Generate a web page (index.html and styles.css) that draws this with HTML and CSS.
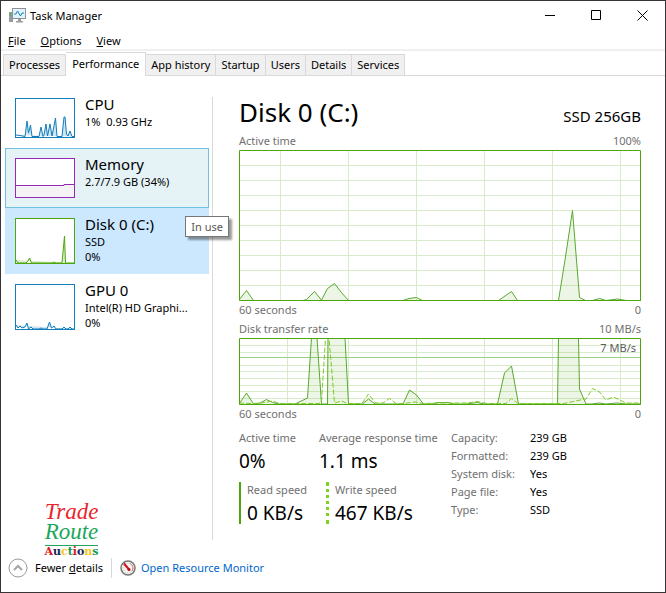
FILE: index.html
```html
<!DOCTYPE html>
<html lang="en">
<head>
<meta charset="utf-8">
<title>Task Manager</title>
<link rel="stylesheet" href="styles.css">
</head>
<body>
<div class="window">
  <header class="titlebar">
    <svg class="app-icon" viewBox="0 0 17 15" aria-hidden="true">
      <rect x="0" y="4" width="4" height="10" fill="#9b9b9b"/>
      <rect x="1" y="5" width="1" height="3" fill="#4caf50"/>
      <rect x="3.5" y="0.5" width="13" height="10" fill="#e3f3fb" stroke="#8b9399"/>
      <path d="M5 6h2l1.500-3 3 5 1.500-3h2" fill="none" stroke="#1883c4"/>
      <path d="M9 11h3v2h2v1.500H7V13h2z" fill="#9b9b9b"/>
    </svg>
    <h1 class="app-name">Task Manager</h1>
    <div class="window-controls">
      <button class="control" aria-label="Minimize"><svg viewBox="0 0 11 11"><path d="M0 5.500h10"/></svg></button>
      <button class="control" aria-label="Maximize"><svg viewBox="0 0 11 11"><path d="M.5.5h9v9h-9z"/></svg></button>
      <button class="control" aria-label="Close"><svg viewBox="0 0 11 11"><path d="M.5.5l10 10M10.500.5l-10 10"/></svg></button>
    </div>
  </header>
  <nav class="menu">
    <button class="menu-item"><u>F</u>ile</button>
    <button class="menu-item"><u>O</u>ptions</button>
    <button class="menu-item"><u>V</u>iew</button>
  </nav>
  <div class="tabs" role="tablist">
    <button class="tab" role="tab">Processes</button>
    <button class="tab active" role="tab" aria-selected="true">Performance</button>
    <button class="tab" role="tab">App history</button>
    <button class="tab" role="tab">Startup</button>
    <button class="tab" role="tab">Users</button>
    <button class="tab" role="tab">Details</button>
    <button class="tab" role="tab">Services</button>
  </div>
  <div class="content">
    <aside class="sidebar">
      <button class="resource">
        <svg class="thumb cpu" viewBox="0 0 58 38" preserveAspectRatio="none"><path d="M0 36L4 36.500 9 37.500 11 22 12.500 34 14.500 26 16 37.500H23L25 28 27 37.500 28 36 30 25 31.500 37 34 25 36 37 39.500 19 41 37.500H46L48 18 49 18 50.500 35 52 37 54 32 56 37.500H58"/></svg>
        <span class="info"><span class="name">CPU</span><span class="detail">1%&nbsp; 0.93 GHz</span></span>
      </button>
      <button class="resource hovered">
        <svg class="thumb memory" viewBox="0 0 58 38" preserveAspectRatio="none"><path d="M-1 26.500h49v-1h11v14H-1z"/></svg>
        <span class="info"><span class="name">Memory</span><span class="detail">2.7/7.9 GB (34%)</span></span>
      </button>
      <button class="resource tall selected">
        <svg class="thumb disk" viewBox="0 0 58 44" preserveAspectRatio="none"><path d="M0 41L2 44H10L12 42 13.500 39 15.500 44H36L38 43 40 44H46L48.500 17 49.500 44H58"/></svg>
        <span class="info"><span class="name">Disk 0 (C:)</span><span class="detail">SSD</span><span class="detail">0%</span></span>
        <span class="tooltip" role="tooltip">In use</span>
      </button>
      <button class="resource tall">
        <svg class="thumb gpu" viewBox="0 0 58 44" preserveAspectRatio="none"><path d="M0 40L2 43 4 41 6 43 9 42 11 38 12.500 44 15 42 17 44H23L25 43 27 44H31L33.500 37 35.500 43 38 41 40 44H46L48 42 50 44H52L54 42 56 44H58"/></svg>
        <span class="info"><span class="name">GPU 0</span><span class="detail">Intel(R) HD Graphi...</span><span class="detail">0%</span></span>
      </button>
      <div class="brand">
        <span class="brand-top">Trade</span>
        <span class="brand-middle">Route</span>
        <span class="brand-bottom"><b class="r">A</b><b class="n">u</b><b class="y">c</b><b class="g">t</b><b class="r">i</b><b class="n">o</b><b class="y">n</b><b class="g">s</b></span>
      </div>
    </aside>
    <main class="panel">
      <div class="heading"><h2>Disk 0 (C:)</h2><span class="model">SSD 256GB</span></div>
      <div class="caption"><span>Active time</span><span>100%</span></div>
      <svg class="chart activity" viewBox="0 0 402 151" preserveAspectRatio="none" role="img" aria-label="Active time">
        <path class="grid" d="M0 15.500h402M0 30.500h402M0 45.500h402M0 60.500h402M0 75.500h402M0 90.500h402M0 105.500h402M0 120.500h402M0 135.500h402M41.500 0v151M109.500 0v151M177.500 0v151M245.500 0v151M313.500 0v151M381.500 0v151"/>
        <path class="read" d="M0 150L7.500 140.500 14.500 150.500H64L67.500 149.500 75.500 141.500 82.500 150 88.500 138.500 95.500 133.500 102 142 109.500 150.500H164L170 148.500 177.500 147.500 183.500 150.500H259.500L272.500 141.500 278.500 150.500H319.500L326 110 333.500 60.500 340.500 147.500 346.500 150.500H353.500L360.500 148.500 367 150.500 378.500 149 387 150.500H402"/>
        <rect class="frame" x=".5" y=".5" width="401" height="150"/>
      </svg>
      <div class="caption below"><span>60 seconds</span><span>0</span></div>
      <div class="caption"><span>Disk transfer rate</span><span>10 MB/s</span></div>
      <div class="chart-wrap">
        <svg class="chart transfer" viewBox="0 0 402 67" preserveAspectRatio="none" role="img" aria-label="Disk transfer rate">
          <path class="grid" d="M0 7.500h402M0 14.500h402M0 27.500h402M0 33.500h402M0 40.500h402M0 47.500h402M0 53.500h402M0 60.500h402M48.500 0v67M109.500 0v67M177.500 0v67M245.500 0v67M313.500 0v67M381.500 0v67"/>
          <path class="limit" d="M0 19.500h402"/>
          <path class="read" d="M0 66L7.500 55 14.500 66 21 65 27.500 61.500 33.500 64.500 40 66H56L68.500 60 72.500 0H78L82.500 66H88.500L89 0H106L109.500 66H123.500L129.500 61 136 66H164L170.500 52 177.500 57 184.500 66H193L199 64.500H209.500L215 66H227L238.500 64.500 245 66H258.500L265.500 35 272.500 28 279.500 66H318.500L319.500 0H339.500L340.500 51 347 66H353L360 65 367 66 378 65 387 66H402"/>
          <path class="write" d="M0 65L14 65.500 22 65 34 63 40 65.500H80L82.500 64 86.500 0H90L95.500 65 102.500 63 108 65.500H123L129.500 56 136.500 65 144 65 150.500 60.500 157 65.500 164 65.500 176 64 184 65.500 200 65 228 65 238 63.500 248 65.500H267L272.500 60.500 279 65.500H325L343.500 61.500 347 61 353.500 50.500 360.500 54 367 62 374.500 59 387 65 402 65"/>
          <rect class="frame" x=".5" y=".5" width="401" height="66"/>
        </svg>
        <span class="limit-label">7 MB/s</span>
      </div>
      <div class="caption below"><span>60 seconds</span><span>0</span></div>
      <div class="stats">
        <div class="figures">
          <div class="figure"><span class="label">Active time</span><span class="value">0%</span></div>
          <div class="figure"><span class="label">Average response time</span><span class="value">1.1 ms</span></div>
          <div class="figure keyed solid"><span class="label">Read speed</span><span class="value">0 KB/s</span></div>
          <div class="figure keyed dotted"><span class="label">Write speed</span><span class="value">467 KB/s</span></div>
        </div>
        <table class="properties">
          <tr><th scope="row">Capacity:</th><td>239 GB</td></tr>
          <tr><th scope="row">Formatted:</th><td>239 GB</td></tr>
          <tr><th scope="row">System disk:</th><td>Yes</td></tr>
          <tr><th scope="row">Page file:</th><td>Yes</td></tr>
          <tr><th scope="row">Type:</th><td>SSD</td></tr>
        </table>
      </div>
    </main>
  </div>
  <footer class="footer">
    <button class="fewer">
      <svg viewBox="0 0 20 20" aria-hidden="true"><circle cx="10" cy="10" r="9" fill="#fff" stroke="#999"/><path d="M6 12l4-4 4 4" fill="none" stroke="#a5a5a5" stroke-width="2"/></svg>
      <span>Fewer <u>d</u>etails</span>
    </button>
    <a class="monitor" href="#">
      <svg viewBox="0 0 16 16" aria-hidden="true"><circle cx="8" cy="8" r="7" fill="#f4f4f4" stroke="#777" stroke-width="1.500"/><circle cx="8" cy="8" r="5" fill="none" stroke="#b9bcae" stroke-dasharray="1 1.500"/><path d="M10 3.500A5 5 0 0 1 12 11" fill="none" stroke="#dd7a62"/><path d="M4 3.500l5 6" stroke="#d3131b" stroke-width="2"/><circle cx="9" cy="9.500" r="1.500" fill="#b50d14"/></svg>
      <span>Open Resource Monitor</span>
    </a>
  </footer>
</div>
</body>
</html>
```
FILE: styles.css
```css
* { box-sizing: border-box; }
body {
  margin: 0;
  background: #fff;
  color: #000;
  font: 11px/16px "Noto Sans", "Open Sans", sans-serif;
}
button {
  margin: 0;
  padding: 0;
  border: 0;
  background: none;
  color: inherit;
  font: inherit;
  text-align: left;
}
svg { display: block; flex: none; }
.window {
  display: flex;
  flex-direction: column;
  min-height: 100vh;
  border: 1px solid #383436;
  background: #fff;
}
.titlebar { display: flex; align-items: center; height: 29px; padding-left: 8px; }
.app-icon { width: 17px; height: 15px; }
.app-name { margin: 0 0 0 4px; font-size: 11px; font-weight: 400; }
.window-controls { display: flex; margin-left: auto; }
.control { display: grid; place-items: center; width: 46px; height: 29px; }
.control svg { width: 11px; height: 11px; fill: none; stroke: #000; }
.menu {
  display: flex;
  gap: 15px;
  height: 21px;
  padding: 2px 7px 0;
  border-bottom: 2px solid #f0f0f0;
}
.tabs {
  display: flex;
  align-items: flex-end;
  height: 25px;
  padding-left: 2px;
  border-bottom: 1px solid #d9d9d9;
}
.tab {
  height: 21px;
  padding: 0 5px;
  border: 1px solid #d9d9d9;
  border-width: 1px 1px 0 0;
  background: #f0f0f0;
}
.tab:first-child { border-left-width: 1px; }
.tab.active {
  height: 24px;
  margin-bottom: -1px;
  padding: 0 6px 2px;
  background: #fff;
}
.content { display: flex; flex: 1; }
.sidebar {
  display: flex;
  flex-direction: column;
  flex: none;
  width: 208px;
  padding: 12px 0 0 4px;
}
.resource {
  position: relative;
  display: flex;
  align-items: flex-start;
  gap: 10px;
  height: 60px;
  padding: 9px;
  border: 1px solid transparent;
}
.resource.tall { height: 66px; }
.resource.hovered { background: #e5f3f7; border-color: #70c0e0; }
.resource.selected { background: #cce8ff; }
.thumb { width: 60px; height: 40px; border: 1px solid; background: #fff; overflow: hidden; }
.tall .thumb { height: 46px; }
.thumb path { stroke: currentColor; fill: currentColor; fill-opacity: .2; }
.cpu, .gpu { color: #117dbb; }
.memory { color: #9528b4; }
.memory path { fill: #f4f2f4; fill-opacity: 1; }
.disk { color: #4da60c; }
.info { display: flex; flex-direction: column; }
.name { margin-top: -3px; font-size: 15px; line-height: 19px; }
.detail { line-height: 15px; white-space: nowrap; }
.tooltip {
  position: absolute;
  top: 7px;
  right: -21px;
  z-index: 1;
  padding: 1px 5px;
  border: 1px solid #767676;
  background: #fff;
  box-shadow: 3px 3px 2px rgba(0, 0, 0, .4);
  color: #575757;
  line-height: 17px;
}
.brand {
  display: flex;
  flex-direction: column;
  align-items: center;
  align-self: flex-start;
  width: 55px;
  margin: auto 0 0 39px;
  font-family: "Liberation Serif", serif;
}
.brand-top, .brand-middle { font-size: 23px; font-style: italic; line-height: 20px; }
.brand-top { color: #e8242c; }
.brand-middle { padding-bottom: 3px; border-bottom: 1px solid #1ca65a; color: #1ca65a; }
.brand-bottom { font-family: "DejaVu Serif", serif; font-size: 11px; line-height: 12px; }
.r { color: #e01820; }
.n { color: #14245c; }
.y { color: #f3c41c; }
.g { color: #169a50; }
.panel {
  flex: 1;
  margin: 21px 0 18px 3px;
  padding: 0 24px 0 26px;
  border-left: 1px solid #d9d9d9;
}
.heading { display: flex; align-items: baseline; justify-content: space-between; height: 36px; }
h2 { margin: 0; font-size: 26px; font-weight: 400; line-height: 30px; }
.model { font-size: 15px; }
.caption { display: flex; justify-content: space-between; height: 17px; color: #707070; }
.caption.below { height: 20px; padding-top: 1px; }
.chart { width: 100%; }
.activity { height: 151px; }
.transfer { height: 67px; }
.chart path, .chart rect { fill: none; vector-effect: non-scaling-stroke; }
.grid { stroke: #d8ebca; }
.limit { stroke: #9bcf86; }
.chart .read { fill: rgba(77, 166, 12, .1); stroke: #59a830; }
.write { stroke: #7ecb25; stroke-dasharray: 5 2; }
.frame { stroke: #4da60c; }
.chart-wrap { position: relative; }
.limit-label { position: absolute; top: 2px; right: 5px; color: #606060; }
.stats { display: flex; gap: 12px; padding-top: 5px; }
.figures { display: grid; grid-template-columns: 80px 120px; grid-template-rows: 50px 44px; }
.figure { display: flex; flex-direction: column; white-space: nowrap; }
.label { color: #707070; line-height: 16px; }
.value { font-size: 19px; line-height: 30px; }
.keyed { margin-top: 2px; padding-left: 6px; border-left: 2px solid #4da60c; }
.dotted { margin-left: 7px; border-left: 3px dotted #7ed321; }
.properties { align-self: flex-start; border-collapse: collapse; }
.properties th, .properties td { padding: 0 0 2px; font-weight: 400; text-align: left; white-space: nowrap; }
.properties th { width: 79px; color: #707070; }
.footer { display: flex; align-items: center; height: 34px; padding: 0 7px 15px; }
.fewer { display: flex; align-items: center; gap: 7px; padding-right: 8px; border-right: 1px solid #d9d9d9; }
.fewer svg { width: 20px; height: 20px; }
.monitor { display: flex; align-items: center; gap: 5px; padding-left: 8px; color: #0066cc; text-decoration: none; }
.monitor svg { width: 16px; height: 16px; }
```
